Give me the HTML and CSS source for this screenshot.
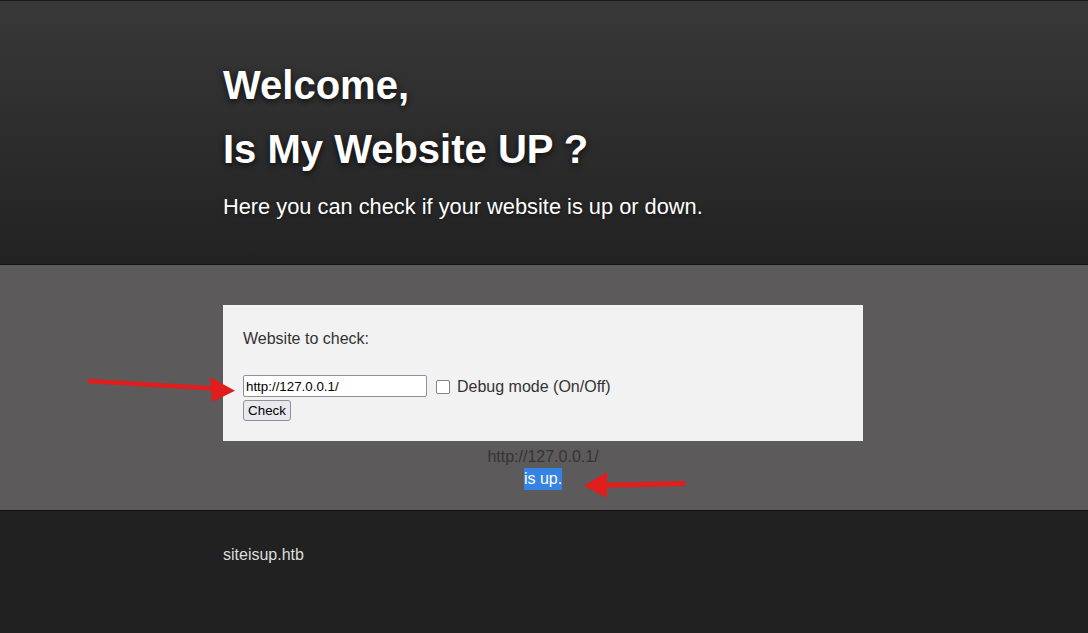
FILE: index.html
```html
<!DOCTYPE html>
<html lang="en">
<head>
<meta charset="utf-8">
<title>Is My Website UP ?</title>
<link rel="stylesheet" href="styles.css">
</head>
<body>
<header class="hero">
  <div class="wrap">
    <h1 class="title">Welcome,<br>Is My Website UP ?</h1>
    <p class="lead">Here you can check if your website is up or down.</p>
  </div>
</header>
<section class="main">
  <div class="wrap">
    <form class="checker">
      <div class="field-label">Website to check:</div>
      <div class="controls">
        <input class="url-input" type="text" value="http://127.0.0.1/">
        <span class="checkbox"></span>
        <span class="debug-label">Debug mode (On/Off)</span>
      </div>
      <button class="check-btn" type="button">Check</button>
    </form>
    <div class="result">
      <div class="result-url">http://127.0.0.1/</div>
      <div><span class="status">is up.</span></div>
    </div>
  </div>
</section>
<footer class="foot">
  <div class="wrap">siteisup.htb</div>
</footer>
<svg class="annotations" width="1088" height="633" viewBox="0 0 1088 633" xmlns="http://www.w3.org/2000/svg">
  <line x1="88" y1="381" x2="214" y2="388.5" stroke="#e11d1d" stroke-width="4.5" stroke-linecap="butt"/>
  <polygon points="210,377 235,390.8 212,402" fill="#e11d1d"/>
  <line x1="685" y1="483.5" x2="604" y2="485.3" stroke="#e11d1d" stroke-width="5" stroke-linecap="butt"/>
  <polygon points="607,472 584,485.7 607,498" fill="#e11d1d"/>
</svg>
</body>
</html>
```
FILE: styles.css
```css
html, body {
  margin: 0;
  padding: 0;
}
body {
  background: #212121;
  font-family: "Liberation Sans", Arial, Helvetica, sans-serif;
  position: relative;
  min-height: 633px;
}
.wrap {
  width: 640px;
  margin-left: calc(50% - 321px);
}
.hero {
  border-top: 1px solid #1a1a1a;
  border-bottom: 1px solid #121212;
  background: linear-gradient(#383838, #222222);
  padding: 52px 0 42px;
}
.title {
  margin: 0;
  font-size: 40px;
  line-height: 64px;
  font-weight: bold;
  color: #ffffff;
  text-shadow: 0 2px 6px rgba(0, 0, 0, 0.75);
}
.lead {
  margin: 11px 0 0;
  font-size: 21.8px;
  line-height: 30px;
  color: #ffffff;
  text-shadow: 0 1px 3px rgba(0, 0, 0, 0.5);
}
.main {
  background: #5c5a5a;
  padding: 40px 0 20px;
  border-bottom: 1px solid #121212;
}
.checker {
  margin: 0;
  background: #f2f2f2;
  padding: 20px;
}
.field-label {
  font-size: 16px;
  line-height: 27px;
  color: #333333;
}
.controls {
  margin-top: 23px;
  display: flex;
  align-items: center;
  height: 22px;
}
.url-input {
  box-sizing: border-box;
  width: 184px;
  height: 22px;
  margin: 0;
  padding: 1px 2px;
  border: 1px solid #8f8f9d;
  border-radius: 2px;
  background: #ffffff;
  font-family: "Liberation Sans", Arial, sans-serif;
  font-size: 13.33px;
  color: #000000;
}
.checkbox {
  box-sizing: border-box;
  width: 14px;
  height: 14px;
  margin-left: 9px;
  margin-top: 1px;
  border: 1.5px solid #84848f;
  border-radius: 2px;
  background: #ffffff;
}
.debug-label {
  margin-left: 7px;
  margin-top: 1px;
  font-size: 16px;
  color: #333333;
}
.check-btn {
  display: block;
  box-sizing: border-box;
  margin-top: 3px;
  width: 48px;
  height: 21px;
  padding: 0 4px;
  border: 1px solid #8f8f9d;
  border-radius: 3px;
  background: #e9e9ed;
  font-family: "Liberation Sans", Arial, sans-serif;
  font-size: 13.33px;
  color: #000000;
}
.result {
  margin-top: 5px;
  text-align: center;
  font-size: 16px;
  line-height: 22px;
  color: #343434;
}
.status {
  display: inline-block;
  background: #3584e4;
  color: #ffffff;
}
.foot {
  padding-top: 35px;
  font-size: 16px;
  line-height: 18px;
  color: #dddddd;
}
.annotations {
  position: absolute;
  top: 0;
  left: 0;
  pointer-events: none;
}
```
